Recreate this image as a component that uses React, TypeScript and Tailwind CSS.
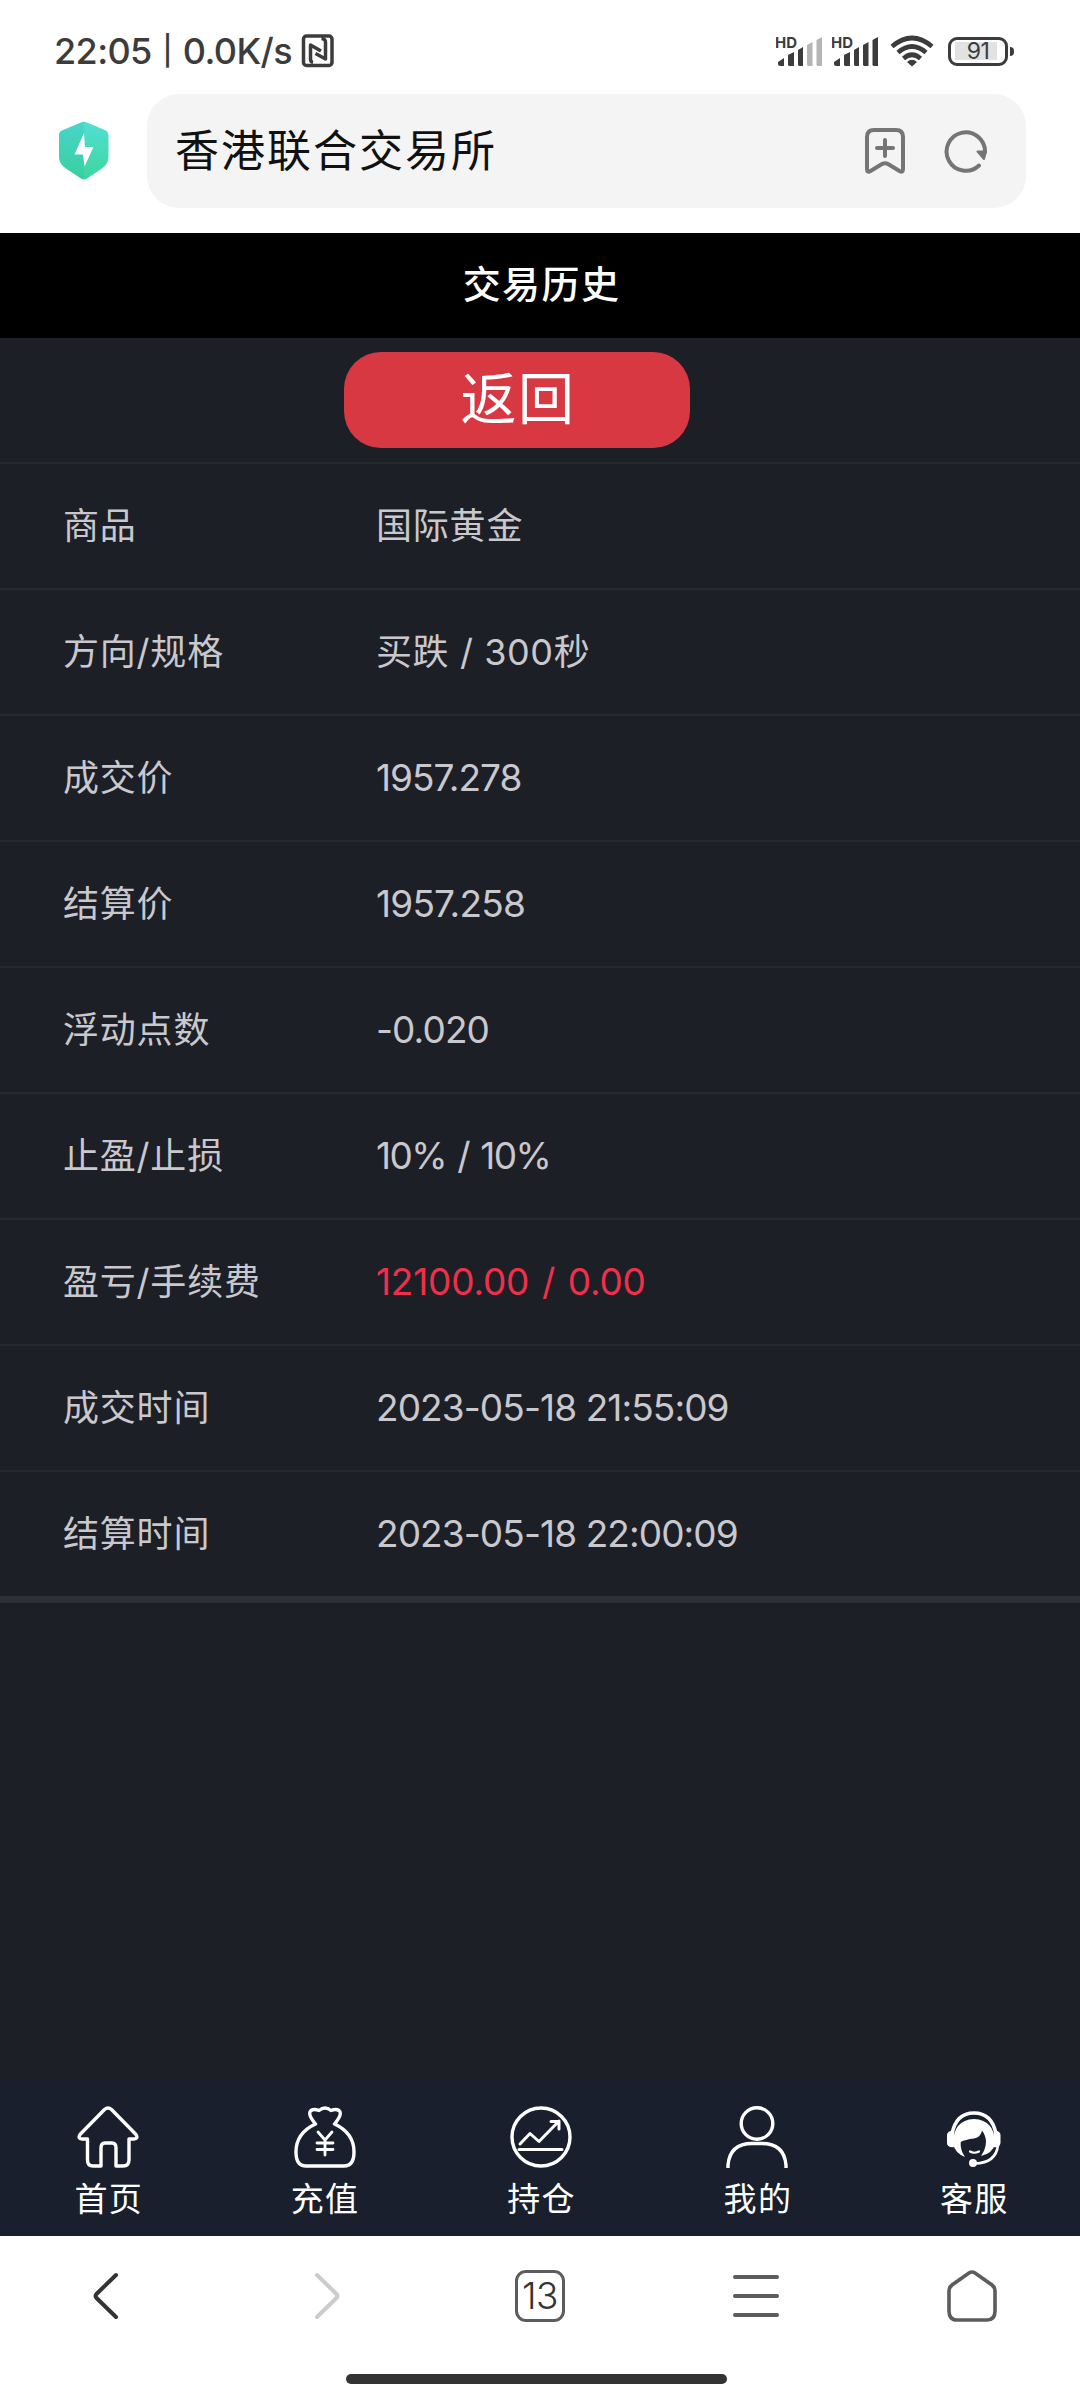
import type { ReactNode } from 'react'

interface Row {
  label: string
  value: string
  style: string
  red?: boolean
}

const rows: Row[] = [
  { label: '商品', value: '国际黄金', style: 'text-[36px] tracking-[0.8px]' },
  { label: '方向/规格', value: '买跌 / 300秒', style: 'text-[36px] tracking-[0.6px]' },
  { label: '成交价', value: '1957.278', style: 'text-[37px] tracking-[-1px]' },
  { label: '结算价', value: '1957.258', style: 'text-[37px] tracking-[-0.8px]' },
  { label: '浮动点数', value: '-0.020', style: 'text-[37px] tracking-[-0.9px]' },
  { label: '止盈/止损', value: '10% / 10%', style: 'text-[37px] tracking-[-1.6px] [word-spacing:2.5px]' },
  { label: '盈亏/手续费', value: '12100.00 / 0.00', style: 'text-[37px] tracking-[-0.2px] [word-spacing:2.5px]', red: true },
  { label: '成交时间', value: '2023-05-18 21:55:09', style: 'text-[37px] tracking-[-0.9px]' },
  { label: '结算时间', value: '2023-05-18 22:00:09', style: 'text-[37px] tracking-[-0.9px]' },
]

function Signal({ weak }: { weak?: boolean }) {
  const dim = weak ? '#b5b5b5' : '#3c3c3c'
  return (
    <svg width="48" height="34" viewBox="0 0 48 34">
      <text x="-1" y="13.500" fontSize="15" fontWeight="700" fill="#3c3c3c" textLength="22" lengthAdjust="spacingAndGlyphs">HD</text>
      <path d="M2 30V28L8 24V32H4Q2 32 2 30Z" fill="#3c3c3c" />
      <path d="M12 31V21L18 18V32H13Z" fill="#3c3c3c" />
      <path d="M22 31V16L27 13V32H23Z" fill="#3c3c3c" />
      <path d="M31 31V11L36.500 8V32H32Z" fill={dim} />
      <path d="M40.500 31V6L46 3V32H41.500Z" fill={dim} />
    </svg>
  )
}

function StatusBar() {
  return (
    <div className="flex h-[94px] items-center pt-2 pr-[66px] pl-[54px] text-[#3c3c3c]">
      <div className="flex items-center text-[36px] font-medium tracking-[-0.6px]">
        <span>22:05</span>
        <span className="w-[31px] text-center text-[29px]">|</span>
        <span>0.0K/s</span>
      </div>
      <svg className="ml-[9px]" width="34" height="34" viewBox="0 0 34 34" fill="none" stroke="#3c3c3c">
        <rect x="2.500" y="2" width="28.500" height="29.500" rx="3" strokeWidth="3.500" />
        <path d="M12 28.500Q9.500 28 9.500 25V11L20 17" strokeWidth="3.500" strokeLinejoin="round" />
        <path d="M20.500 4.500Q24.500 5 24.500 8V25L14.500 19.500" strokeWidth="3.500" strokeLinejoin="round" />
      </svg>
      <div className="ml-auto flex items-center">
        <Signal weak />
        <div className="w-2" />
        <Signal />
        <svg className="ml-2.5" width="44" height="34" viewBox="0 0 44 34" fill="none" stroke="#3c3c3c" strokeWidth="4.600">
          <path d="M2 12.500Q22 -4.500 42 12.500" />
          <path d="M8 18.500Q22 6.500 36 18.500" />
          <path d="M13.500 24.500Q22 17 30.500 24.500" />
          <path d="M22 32.500L17 28Q22 23.500 27 28Z" fill="#3c3c3c" stroke="none" />
        </svg>
        <div className="ml-3.5 flex h-[29px] w-[60px] items-center justify-center rounded-[9px] border-3 border-[#3c3c3c] p-1">
          <div className="mr-1 flex h-[18px] w-full items-center justify-center bg-[#e2e2e2] pl-1 text-[23px] tracking-[-0.5px]">91</div>
        </div>
        <div className="ml-[2px] h-[9px] w-1 rounded-r-sm bg-[#3c3c3c]" />
      </div>
    </div>
  )
}

function AddressBar() {
  return (
    <div className="flex h-[139px] items-start pr-[54px] pl-[59px]">
      <svg className="mt-[27px]" width="50" height="60" viewBox="0 0 50 60">
        <defs>
          <linearGradient id="shield" x1="0" y1="0" x2="0" y2="1">
            <stop offset="0" stopColor="#52dfd5" />
            <stop offset="1" stopColor="#3cd69d" />
          </linearGradient>
        </defs>
        <path d="M22 1.500Q25 0 28 1.500L47 9.500Q49.500 11 49.500 14V36Q49.500 43 43 47.500L28 57.500Q25 59.500 22 57.500L7 47.500Q0 43 0 36V14Q0 11 3 9.500Z" fill="url(#shield)" />
        <path d="M25 .8Q23.500 .8 22 1.500L3 9.500Q0 11 0 14V36Q0 43 7 47.500L22 57.500Q23.500 58.500 25 58.500Z" fill="#2dbfae" opacity=".28" />
        <path d="M25 12L15.500 33.500H24L25.500 45.500L34.500 26H26Z" fill="#fff" />
      </svg>
      <div className="ml-[38px] flex h-[114px] flex-1 items-center rounded-[32px] bg-[#f4f4f4] pr-[38px] pl-7">
        <span className="text-[44px] tracking-[2px] text-[#111]">香港联合交易所</span>
        <svg className="ml-auto" width="42" height="46" viewBox="0 0 42 46" fill="none" stroke="#757575" strokeWidth="4" strokeLinecap="round" strokeLinejoin="round">
          <path d="M3 9Q3 2 10 2H32Q39 2 39 9V41Q39 45 35.500 43L24 36Q21 34.500 18 36L6.500 43Q3 45 3 41Z" />
          <path d="M13 20H29M21 12V28" />
        </svg>
        <svg className="ml-[38px]" width="44" height="44" viewBox="0 0 44 44" fill="none" stroke="#757575" strokeWidth="4" strokeLinecap="round">
          <path d="M35 36.500A19.200 19.200 0 1 1 41 23" />
          <path d="M33.500 22.500H42L40 30Z" fill="#757575" strokeWidth="2" strokeLinejoin="round" />
        </svg>
      </div>
    </div>
  )
}

function Tab({ label, children }: { label: string; children: ReactNode }) {
  return (
    <div className="flex flex-1 flex-col items-center pt-[26px]">
      <svg width="62" height="62" viewBox="0 0 62 62" fill="none" stroke="#fff" strokeWidth="3.400" strokeLinecap="round" strokeLinejoin="round">
        {children}
      </svg>
      <span className="mt-[6px] pl-px text-[33px] leading-[50px] tracking-[1.3px] text-white">{label}</span>
    </div>
  )
}

function TabBar() {
  return (
    <nav className="flex h-[156px] w-[1082px] bg-[#191f2d]">
      <Tab label="首页">
        <path d="M27.500 3.500Q31 .5 34.500 3.500L59 28.500Q61.500 33 57 33H52V54Q52 60 46 60H39V42Q39 37 35 37H28Q24 37 24 42V60H16Q10.500 60 10.500 54V33H5Q.5 33 3 28.500Z" />
      </Tab>
      <Tab label="充值">
        <path d="M21.500 18Q13 8 17 4.500Q20 2.500 25 4.500Q31 -.5 37 4.500Q42 2.500 45 4.500Q49 8 40.500 18Q60 27 60 46Q60 60 50 60H12Q2 60 2 46Q2 27 21.500 18Z" />
        <path d="M24 26L31 34L38 26M31 34V49M23 37H39M23 43.500H39" strokeWidth="2.800" />
      </Tab>
      <Tab label="持仓">
        <circle cx="31" cy="31" r="29" />
        <path d="M10 38L20 27.500L29 35.500L49 15M41 15.500H49V23M9 43.500H52" strokeWidth="3" />
      </Tab>
      <Tab label="我的">
        <circle cx="31" cy="17.500" r="15.800" />
        <path d="M2 62V59Q4 37.500 26 37.500H36Q58 37.500 60 59V62" />
      </Tab>
      <Tab label="客服">
        <path d="M9 28Q13 7 31 7Q49 7 53 28" strokeWidth="3.600" strokeLinecap="butt" />
        <path d="M11 24Q4 25 4 29V37Q4 42 12 41Z" fill="#fff" stroke="none" />
        <path d="M51 24Q57.500 25 57.500 29V37Q57 42 50 41Z" fill="#fff" stroke="none" />
        <path d="M10 38Q10 14 31 13Q52 14 52 38Q50 47 38 50Q43 43 43 35Q42.500 29 39 24.500Q38 31 31 32.500Q22 33.500 17.700 36Q17 44 22 51Q12 47 10 38Z" fill="#fff" stroke="none" />
        <path d="M27 45.500Q31 48 36 45.500" strokeWidth="2.200" />
        <path d="M55 39Q53 57 32 57.500" strokeWidth="2.600" />
        <circle cx="30" cy="57" r="4" fill="#fff" stroke="none" />
      </Tab>
    </nav>
  )
}

function BrowserBar() {
  return (
    <footer className="flex h-[164px] flex-col items-center bg-white">
      <div className="flex h-[120px] w-full items-center">
        <div className="flex w-1/5 justify-center pr-0.5">
          <svg width="30" height="50" viewBox="0 0 30 50" fill="none" stroke="#333" strokeWidth="4" strokeLinecap="round">
            <path d="M24 4L4.500 23Q2.500 25 4.500 27L24 46" />
          </svg>
        </div>
        <div className="flex w-1/5 justify-center pl-[6px]">
          <svg width="30" height="50" viewBox="0 0 30 50" fill="none" stroke="#ccc" strokeWidth="4" strokeLinecap="round">
            <path d="M5 4L24.500 23Q26.500 25 24.500 27L5 46" />
          </svg>
        </div>
        <div className="flex w-1/5 justify-center">
          <div className="flex h-[52px] w-[50px] items-center justify-center rounded-[11px] border-[3.500px] border-[#5c5c5c] text-[37px] font-light tracking-[-0.5px] text-[#333]">13</div>
        </div>
        <div className="flex w-1/5 justify-center">
          <div className="flex flex-col gap-[15px]">
            <div className="h-1 w-[46px] rounded-full bg-[#5c5c5c]" />
            <div className="h-1 w-[46px] rounded-full bg-[#5c5c5c]" />
            <div className="h-1 w-[46px] rounded-full bg-[#5c5c5c]" />
          </div>
        </div>
        <div className="flex w-1/5 justify-center">
          <svg width="50" height="52" viewBox="0 0 50 52" fill="none" stroke="#5c5c5c" strokeWidth="3.600">
            <path d="M22 3Q25 1 28 3L45 15Q48 17.500 48 21V41Q48 50 40 50H10Q2 50 2 41V21Q2 17.500 5 15Z" />
          </svg>
        </div>
      </div>
      <div className="mt-[18px] mr-[7px] h-[10px] w-[381px] rounded-full bg-[#333]" />
    </footer>
  )
}

export default function App() {
  return (
    <div className="flex h-[2400px] w-[1080px] flex-col overflow-hidden bg-white font-[Inter,'Noto_Sans_CJK_SC',sans-serif]">
      <StatusBar />
      <AddressBar />
      <h1 className="flex h-[105px] items-center justify-center bg-black pb-[2px] pl-[3px] text-[38px] font-medium tracking-[1.4px] text-white">
        交易历史
      </h1>

      <main className="flex-1 bg-[#1d1f27]">
        <div className="h-[124px] pt-[14px] pl-[344px]">
          <button className="flex h-24 w-[346px] items-center justify-center rounded-[37px] bg-[#d73842] pb-[2px] pl-[2px] text-[56px] leading-none tracking-[1.5px] text-white">
            返回
          </button>
        </div>
        {rows.map((row) => (
          <div key={row.label} className="flex h-[126px] items-center border-t-2 border-[#272931] pb-px pl-[63px] text-[#c9c8cd]">
            <span className="w-[313px] text-[36px] tracking-[0.8px]">{row.label}</span>
            <span className={`whitespace-pre ${row.style} ${row.red ? 'text-[#f0304a]' : ''}`}>{row.value}</span>
          </div>
        ))}
        <div className="h-[7px] bg-[#2e3036]" />
      </main>

      <TabBar />
      <BrowserBar />
    </div>
  )
}
